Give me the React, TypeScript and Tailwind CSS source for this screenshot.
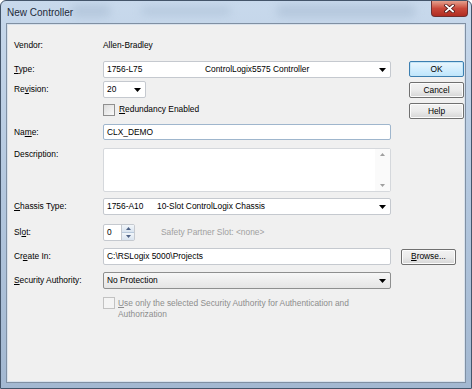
import React from "react";

const font = { fontFamily: '"Liberation Sans", Arial, sans-serif' };

function Arrow() {
  return (
    <svg width="7" height="4" viewBox="0 0 7 4" className="shrink-0">
      <path d="M0 0 H7 L3.5 4 Z" fill="#000" />
    </svg>
  );
}

function Combo({ children, w, button }: { children: React.ReactNode; w?: string; button?: boolean }) {
  return (
    <div
      className={
        "flex h-[17px] items-center justify-between rounded-[2px] border pl-[3px] pr-[4px] " +
        (button
          ? "border-[#8e8f8f] bg-gradient-to-b from-[#f7f7f7] to-[#e5e5e5] "
          : "border-[#c5c9cf] bg-white ") +
        (w ?? "w-[288px]")
      }
    >
      <div className="flex items-center">{children}</div>
      <Arrow />
    </div>
  );
}

function Btn({ children, def }: { children: React.ReactNode; def?: boolean }) {
  return (
    <div
      className={
        "flex h-[16px] w-[55px] items-center justify-center rounded-[2px] border text-[#000] " +
        (def
          ? "border-[#3c7fb1] bg-gradient-to-b from-[#eaf6fd] to-[#bee6fd] shadow-[inset_0_0_0_1px_#c4e5f6]"
          : "border-[#707070] bg-gradient-to-b from-[#f2f2f2] via-[#ebebeb] to-[#d6d6d6] shadow-[inset_0_0_0_1px_#fcfcfc]")
      }
    >
      {children}
    </div>
  );
}

function Label({ children }: { children: React.ReactNode }) {
  return <div className="w-[89px] shrink-0">{children}</div>;
}

export default function App() {
  return (
    <div className="w-[472px] h-[389px] bg-white" style={font}>
      <div className="flex h-full w-full flex-col rounded-t-[6px] border border-[#44556a] bg-gradient-to-b from-[#c8d9ec] via-[#b3c7de] to-[#a3b8d1] text-[8.4px] leading-none text-black">
        {/* Title bar */}
        <div className="relative flex h-[22px] items-start justify-between overflow-hidden">
          <div className="pointer-events-none absolute left-[70px] top-[4px] h-[12px] w-[40px] rounded-full bg-[#a9bdd3] opacity-60 blur-[4px]" />
          <div className="pointer-events-none absolute left-[140px] top-[6px] h-[8px] w-[90px] rounded-full bg-[#aabed4] opacity-60 blur-[4px]" />
          <div className="pointer-events-none absolute left-[275px] top-[4px] h-[12px] w-[140px] rounded-full bg-[#a9bdd3] opacity-60 blur-[4px]" />
          <div className="relative pl-[6px] pt-[7px] text-[10px] text-[#1e2a3a]">New Controller</div>
          <div className="relative mr-[3px] flex h-[16px] w-[37px] items-center justify-center rounded-b-[4px] border border-t-0 border-[#6e2f2f] bg-gradient-to-b from-[#e4a08e] via-[#c9483a] to-[#b02c22]">
            <svg width="11" height="9" viewBox="0 0 11 9">
              <path d="M2 1.5 L9 7.5 M9 1.5 L2 7.5" stroke="#4a1414" strokeWidth="3.4" strokeLinecap="square" />
              <path d="M2 1.5 L9 7.5 M9 1.5 L2 7.5" stroke="#ffffff" strokeWidth="1.8" strokeLinecap="square" />
            </svg>
          </div>
        </div>
        {/* Client */}
        <div className="mx-[5px] mb-[5px] flex-1 border border-[#8090a3] bg-[#f0f0f0] pl-[7px] shadow-[inset_0_0_0_1px_#d9e2ec]">
          <div className="flex h-[92px] items-start">
            <div className="flex w-[385px] flex-col">
              <div className="mt-[14px] flex h-[14px] items-center">
                <Label>Vendor:</Label>
                <div>Allen-Bradley</div>
              </div>
              <div className="mt-[9px] flex items-center">
                <Label>
                  <u>T</u>ype:
                </Label>
                <Combo>
                  <span className="w-[98px]">1756-L75</span>
                  <span>ControlLogix5575 Controller</span>
                </Combo>
              </div>
              <div className="mt-[3px] flex items-center">
                <Label>
                  Re<u>v</u>ision:
                </Label>
                <Combo w="w-[43px]">20</Combo>
              </div>
              <div className="mt-[5px] flex h-[13px] items-center">
                <Label>{""}</Label>
                <div className="mr-[4px] h-[12px] w-[12px] border border-[#8f8f8f] bg-gradient-to-br from-[#dcdcdc] to-[#fafafa]" />
                <div>
                  <u>R</u>edundancy Enabled
                </div>
              </div>
            </div>
            <div className="ml-[10px] flex flex-col gap-[5px] pt-[37px]">
              <Btn def>OK</Btn>
              <Btn>Cancel</Btn>
              <Btn>Help</Btn>
            </div>
          </div>
          <div className="mt-[8px] flex items-center">
            <Label>
              Na<u>m</u>e:
            </Label>
            <div className="flex h-[16px] w-[288px] items-center rounded-[2px] border border-[#9fb6cd] bg-white pl-[3px]">
              CLX_DEMO
            </div>
          </div>
          <div className="mt-[8px] flex items-start">
            <Label>
              <div className="pt-[2px]">Description:</div>
            </Label>
            <div className="flex h-[44px] w-[288px] rounded-[2px] border border-[#d5d8dc] bg-white">
              <div className="flex-1" />
              <div className="flex w-[15px] flex-col items-center justify-between bg-[#fafafa] py-[4px]">
                <svg width="5" height="3" viewBox="0 0 5 3">
                  <path d="M0 3 L2.5 0 L5 3 Z" fill="#a0a0a0" />
                </svg>
                <svg width="5" height="3" viewBox="0 0 5 3">
                  <path d="M0 0 L2.5 3 L5 0 Z" fill="#a0a0a0" />
                </svg>
              </div>
            </div>
          </div>
          <div className="mt-[6px] flex items-center">
            <Label>
              <u>C</u>hassis Type:
            </Label>
            <Combo>
              <span className="w-[50px]">1756-A10</span>
              <span>10-Slot ControlLogix Chassis</span>
            </Combo>
          </div>
          <div className="mt-[9px] flex items-center">
            <Label>
              Sl<u>o</u>t:
            </Label>
            <div className="flex h-[17px] w-[32px] rounded-[2px] border border-[#c5c9cf] bg-white">
              <div className="flex flex-1 items-center pl-[3px]">0</div>
              <div className="flex w-[13px] flex-col border-l border-[#c5c9cf]">
                <div className="flex flex-1 items-center justify-center border-b border-[#b7c8db] bg-gradient-to-b from-[#f2f6fa] to-[#d9e4ef]">
                  <svg width="5" height="3" viewBox="0 0 5 3">
                    <path d="M0 3 L2.5 0 L5 3 Z" fill="#4d6185" />
                  </svg>
                </div>
                <div className="flex flex-1 items-center justify-center bg-gradient-to-b from-[#f2f6fa] to-[#d9e4ef]">
                  <svg width="5" height="3" viewBox="0 0 5 3">
                    <path d="M0 0 L2.5 3 L5 0 Z" fill="#4d6185" />
                  </svg>
                </div>
              </div>
            </div>
            <div className="ml-[26px] text-[#a0a0a0]">Safety Partner Slot: &lt;none&gt;</div>
          </div>
          <div className="mt-[7px] flex items-center">
            <Label>
              Cr<u>e</u>ate In:
            </Label>
            <div className="flex h-[17px] w-[288px] items-center rounded-[2px] border border-[#c5c9cf] bg-white pl-[3px]">
              C:\RSLogix 5000\Projects
            </div>
            <div className="ml-[10px]">
              <Btn>
                <span>
                  <u>B</u>rowse...
                </span>
              </Btn>
            </div>
          </div>
          <div className="mt-[7px] flex items-center">
            <Label>
              <u>S</u>ecurity Authority:
            </Label>
            <Combo button>No Protection</Combo>
          </div>
          <div className="mt-[8px] flex items-start">
            <Label>{""}</Label>
            <div className="mr-[3px] h-[12px] w-[12px] shrink-0 border border-[#c2c2c2] bg-[#f4f4f4]" />
            <div className="pt-[1px] leading-[10.5px] text-[#8d8d8d]">
              <u>U</u>se only the selected Security Authority for Authentication and
              <br />
              Authorization
            </div>
          </div>
        </div>
      </div>
    </div>
  );
}
